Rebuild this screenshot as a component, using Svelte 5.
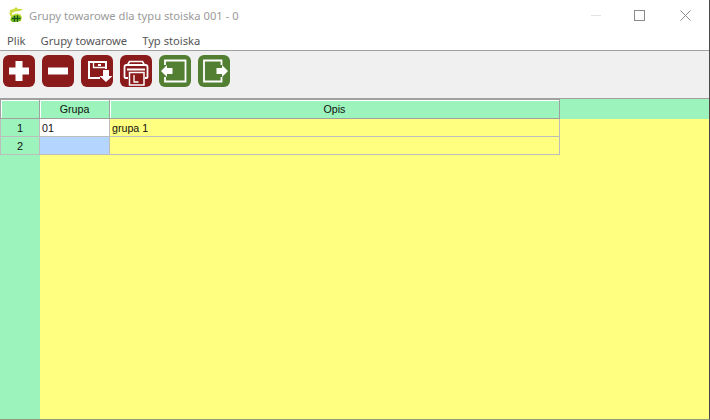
<script>
  const rows = [
    { n: 1, grupa: '01', opis: 'grupa 1' },
    { n: 2, grupa: '', opis: '' }
  ];
</script>

<div class="win">
  <header class="title">
    <svg class="logo" width="16" height="17" viewBox="0 0 16 17">
      <path d="M2 4 L6 3 L8 1 L10 3 L15 3 L12 5 L7 5.500 L4 7 L4 9 L8 7.500 L12 8 L14 11 L13 15 L9 16 L4 16 L2 14 L3 11 L1.500 8 Z" fill="#c9dc3a"/>
      <path d="M3 12 L6 9.500 L10 9 L13 11 L12.500 14.500 L9 16 L5 16 L3 14.500 Z" fill="#5fae24"/>
      <path d="M6.500 10 V15.500 M9.500 9.500 V15.500 M4 12.500 H12.500" stroke="#1c4a10" stroke-width="1" fill="none"/>
    </svg>
    <span class="t">Grupy towarowe dla typu stoiska 001 - 0</span>
    <div class="ctl">
      <span class="min"></span>
      <span class="max"></span>
      <svg class="close" width="11" height="11" viewBox="0 0 11 11"><path d="M.5.5l10 10M10.5.5l-10 10" stroke="#8a8a8a" stroke-width="1"/></svg>
    </div>
  </header>

  <nav class="menu"><span>Plik</span><span>Grupy towarowe</span><span>Typ stoiska</span></nav>

  <div class="toolbar">
    <div class="btn red"><svg viewBox="0 0 32 32"><path d="M12.500 6h7v6.500H26v7h-6.500V26h-7v-6.500H6v-7h6.500z" fill="#fff"/></svg></div>
    <div class="btn red"><svg viewBox="0 0 32 32"><rect x="6" y="12.500" width="20" height="7" fill="#fff"/></svg></div>
    <div class="btn red"><svg viewBox="0 0 32 32">
      <path d="M19 23H8V7h17v7" fill="none" stroke="#fff" stroke-width="2"/>
      <path d="M12.500 7v5.500H25" fill="none" stroke="#fff" stroke-width="1.300"/>
      <rect x="17" y="9" width="3" height="2" fill="#fff"/>
      <path d="M22 15h6v6h3.500l-6.500 6-6.500-6H22z" fill="#fff"/>
    </svg></div>
    <div class="btn red"><svg viewBox="0 0 32 32">
      <path d="M7.500 10l2-3.500h13l2 3.500z" fill="none" stroke="#fff" stroke-width="1.600"/>
      <path d="M8 23H5.500a1 1 0 0 1-1-1V12a2 2 0 0 1 2-2h19a2 2 0 0 1 2 2v10a1 1 0 0 1-1 1H25" fill="none" stroke="#fff" stroke-width="1.800"/>
      <path d="M7 14.500h18" stroke="#fff" stroke-width="2"/>
      <rect x="9.500" y="17.500" width="14.500" height="12.500" fill="#8b1a1a" stroke="#fff" stroke-width="1.500"/>
      <path d="M14 20v7h4.500" fill="none" stroke="#fff" stroke-width="1.300"/>
    </svg></div>
    <div class="btn green"><svg viewBox="0 0 32 32">
      <path d="M6 10V5.500h20.500v21H6V22" fill="none" stroke="#fff" stroke-width="1.800"/>
      <path d="M2 16l6-6v3h5.500v6H8v3z" fill="#fff"/>
    </svg></div>
    <div class="btn green"><svg viewBox="0 0 32 32">
      <path d="M23.500 10V5.500H6v21h17.500V22" fill="none" stroke="#fff" stroke-width="1.800"/>
      <path d="M30 16l-6-6v3h-5.500v6H24v3z" fill="#fff"/>
    </svg></div>
  </div>

  <main class="area">
    <div class="grid">
      <div class="head corner"></div>
      <div class="head">Grupa</div>
      <div class="head">Opis</div>
      {#each rows as r}
        <div class="rowno">{r.n}</div>
        <div class="cell" class:white={r.n === 1} class:sel={r.n === 2}>{r.grupa}</div>
        <div class="cell">{r.opis}</div>
      {/each}
    </div>
  </main>
</div>

<style>
  :global(body) { margin: 0; background: #fff; }
  .win {
    width: 710px; height: 420px; box-sizing: border-box;
    display: flex; flex-direction: column; overflow: hidden;
    font-family: "Liberation Sans", Arial, sans-serif;
    border-right: 1px solid #4a4a4a; border-bottom: 1px solid #8f9a78;
    background: #fff;
  }
  .title {
    height: 30px; flex: none; display: flex; align-items: center;
    font-size: 11.2px; color: #9a9a9a;
  }
  .logo { margin-left: 8px; margin-right: 5px; margin-top: -1px; }
  .t { font-family: "Noto Sans", "Open Sans", sans-serif; }
  .ctl { margin-left: auto; display: flex; align-items: center; }
  .min { width: 10px; height: 1px; background: #e2e2e2; margin-right: 33px; margin-top: 1px; }
  .max { width: 9px; height: 9px; border: 1px solid #8a8a8a; margin-right: 35px; }
  .close { margin-right: 18px; }
  .menu {
    height: 21px; flex: none; box-sizing: border-box; display: flex; align-items: center; gap: 15px; padding-left: 7px;
    font-family: "Noto Sans", "Open Sans", sans-serif; font-size: 11.2px; color: #555;
    border-bottom: 1px solid #a0a0a0;
  }
  .toolbar {
    height: 48px; flex: none; box-sizing: border-box; background: #f0f0f0;
    display: flex; gap: 7px; padding: 4px 0 0 3px;
    border-bottom: 1px solid #a0a0a0;
  }
  .btn { width: 32px; height: 32px; border-radius: 6px; }
  .btn svg { display: block; width: 32px; height: 32px; }
  .red { background: #8b1a1a; }
  .green { background: #527f32; }
  .area {
    flex: 1; min-height: 0;
    background:
      linear-gradient(#9cf4bc, #9cf4bc) 0 0 / 100% 20px no-repeat,
      linear-gradient(#9cf4bc, #9cf4bc) 0 0 / 40px 100% no-repeat,
      #ffff80;
  }
  .grid {
    display: grid; grid-template-columns: 40px 70px 450px; grid-template-rows: 20px; grid-auto-rows: 18px;
    width: 560px; font-size: 10.67px; color: #111;
  }
  .head {
    box-sizing: border-box; background: #9cf4bc;
    border: 1px solid #a0a0a0; border-width: 1px 1px 1px 0;
    box-shadow: inset 1px 1px 0 #fff;
    display: flex; align-items: center; justify-content: center;
  }
  .head.corner { border-left-width: 1px; }
  .rowno {
    box-sizing: border-box; background: #9cf4bc; border-right: 1px solid #bdbdbd;
    border-bottom: 1px solid #bdbdbd; border-left: 1px solid #bdbdbd;
    display: flex; align-items: center; justify-content: center; font-size: 11px;
  }
  .cell {
    box-sizing: border-box; background: #ffff80; border-right: 1px solid #bdbdbd;
    border-bottom: 1px solid #bdbdbd; padding-left: 2px; line-height: 19px; white-space: nowrap;
  }
  .cell.white { background: #fff; }
  .cell.sel { background: #b4d5fe; }
</style>
